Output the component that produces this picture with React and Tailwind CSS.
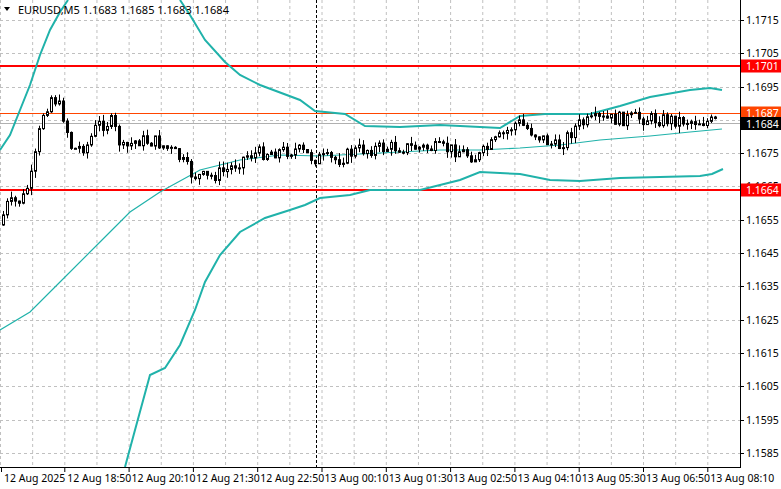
import React from 'react'

const W = 740
const H = 467
const py = (p) => 20 + (1.1715 - p) * 33300

// target path of price (in px), candles follow it with noise
const path = [
  [0, 230], [10, 205], [25, 200], [35, 175], [45, 115], [55, 95], [65, 112], [75, 150], [90, 145],
  [100, 125], [115, 122], [125, 150], [140, 140], [160, 142], [180, 155], [195, 175], [210, 178],
  [230, 170], [250, 155], [270, 152], [300, 150], [316, 158], [340, 160], [360, 150], [400, 147],
  [430, 148], [460, 150], [480, 158], [500, 140], [520, 122], [540, 135], [560, 148], [580, 125],
  [600, 120], [640, 118], [680, 120], [715, 122],
]
const interp = (x) => {
  for (let i = 0; i < path.length - 1; i++) {
    const [x0, y0] = path[i]
    const [x1, y1] = path[i + 1]
    if (x >= x0 && x <= x1) return y0 + ((y1 - y0) * (x - x0)) / (x1 - x0)
  }
  return path[path.length - 1][1]
}

let seed = 7
const rnd = () => {
  seed = (seed * 9301 + 49297) % 233280
  return seed / 233280
}

const candles = []
let prev = interp(2)
for (let x = 2; x <= 715; x += 4) {
  const close = interp(x + 4) + (rnd() - 0.5) * 14
  const open = prev
  const hi = Math.min(open, close) - rnd() * 7
  const lo = Math.max(open, close) + rnd() * 7
  candles.push({ x, open, close, hi, lo })
  prev = close
}

const upperA = '0,150 10,135 20,110 30,85 40,55 50,30 60,12 68,0'
const upperB = '180,0 190,15 205,40 225,62 240,75 260,85 300,100 315,111 345,114 365,126 400,127 440,125 500,128 520,116 545,114 590,114 620,106 650,97 690,90 710,88 722,90'
const lower = '125,467 135,430 150,375 165,368 180,345 195,310 205,282 220,255 240,232 265,218 290,210 305,205 320,198 350,195 370,190 420,190 440,185 460,180 480,172 520,174 550,180 580,181 620,178 660,177 700,176 712,174 723,169'
const middle = '0,330 30,312 60,282 100,242 130,212 160,192 200,170 240,160 280,155 320,156 360,154 400,152 440,150 480,150 520,148 560,145 600,140 650,136 690,132 722,129'

const prices = []
for (let i = 0; i <= 13; i++) prices.push((1.1715 - i * 0.001).toFixed(4))

const times = ['12 Aug 2025', '12 Aug 18:50', '12 Aug 20:10', '12 Aug 21:30', '12 Aug 22:50', '13 Aug 00:10', '13 Aug 01:30', '13 Aug 02:50', '13 Aug 04:10', '13 Aug 05:30', '13 Aug 06:50', '13 Aug 08:10']

const flags = [
  { y: 66, text: '1.1701', bg: '#ff0000' },
  { y: 113, text: '1.1687', bg: '#ff4500' },
  { y: 123.5, text: '1.1684', bg: '#000000' },
  { y: 190, text: '1.1664', bg: '#ff0000' },
]

export default function App() {
  return (
    <div className="w-[781px] h-[489px] bg-white overflow-hidden font-['Liberation_Sans',Arial,sans-serif]">
      <svg width="781" height="489">
        {/* grid */}
        {Array.from({ length: 23 }, (_, i) => (
          <line key={'v' + i} x1={32.15 * i + 0.5} x2={32.15 * i + 0.5} y1="0" y2={H} stroke="#c0c0c0" strokeDasharray="3 3" />
        ))}
        {prices.map((p) => (
          <line key={'h' + p} x1="0" x2={W} y1={Math.round(py(+p)) + 0.5} y2={Math.round(py(+p)) + 0.5} stroke="#c0c0c0" strokeDasharray="3 3" />
        ))}
        <line x1="316.5" x2="316.5" y1="0" y2={H} stroke="#000" strokeDasharray="3 2" />

        {/* level lines */}
        <line x1="0" x2={W} y1="66" y2="66" stroke="#ff0000" strokeWidth="2" />
        <line x1="0" x2={W} y1="113.5" y2="113.5" stroke="#ff4500" />
        <line x1="0" x2={W} y1="123.5" y2="123.5" stroke="#b0b0b0" />
        <line x1="0" x2={W} y1="190" y2="190" stroke="#ff0000" strokeWidth="2" />

        {/* bands */}
        <polyline points={upperA} fill="none" stroke="#20b2aa" strokeWidth="2" />
        <polyline points={upperB} fill="none" stroke="#20b2aa" strokeWidth="2" />
        <polyline points={lower} fill="none" stroke="#20b2aa" strokeWidth="2" />
        <polyline points={middle} fill="none" stroke="#20b2aa" strokeWidth="1.2" />

        {/* candles */}
        {candles.map((c) => {
          const top = Math.min(c.open, c.close)
          const h = Math.max(1, Math.abs(c.open - c.close))
          const bull = c.close < c.open
          return (
            <g key={c.x}>
              <line x1={c.x + 1.5} x2={c.x + 1.5} y1={c.hi} y2={c.lo} stroke="#000" />
              <rect x={c.x + 0.5} y={top} width="2" height={h} fill={bull ? '#fff' : '#000'} stroke="#000" />
            </g>
          )
        })}

        {/* header */}
        <path d="M4 7 L10 7 L7 11 Z" fill="#000" />
        <text x="18" y="14" fontSize="11" fill="#000">EURUSD,M5  1.1683 1.1685 1.1683 1.1684</text>

        {/* axes */}
        <rect x={W} y="0" width="41" height="489" fill="#fff" />
        <rect x="0" y={H + 1} width="781" height="22" fill="#fff" />
        <line x1={W + 0.5} x2={W + 0.5} y1="0" y2={H + 1} stroke="#000" />
        <line x1="0" x2={W + 1} y1={H + 0.5} y2={H + 0.5} stroke="#000" />
        {prices.map((p) => {
          const y = Math.round(py(+p))
          return (
            <g key={'p' + p}>
              <line x1={W} x2={W + 4} y1={y + 0.5} y2={y + 0.5} stroke="#000" />
              <text x={W + 6} y={y + 4} fontSize="10.5" fill="#000">{p}</text>
            </g>
          )
        })}
        {flags.map((f) => (
          <g key={f.text}>
            <rect x={W + 1} y={f.y - 6.5} width="40" height="13" fill={f.bg} />
            <text x={W + 6} y={f.y + 4} fontSize="10.5" fill="#fff">{f.text}</text>
          </g>
        ))}
        {times.map((t, i) => {
          const x = i === 0 ? 1 : 64.3 * i
          return (
            <g key={t}>
              <line x1={x + 0.5} x2={x + 0.5} y1={H} y2={H + 5} stroke="#000" />
              <text x={x + 3} y={H + 15} fontSize="10.5" fill="#000">{t}</text>
            </g>
          )
        })}
      </svg>
    </div>
  )
}
